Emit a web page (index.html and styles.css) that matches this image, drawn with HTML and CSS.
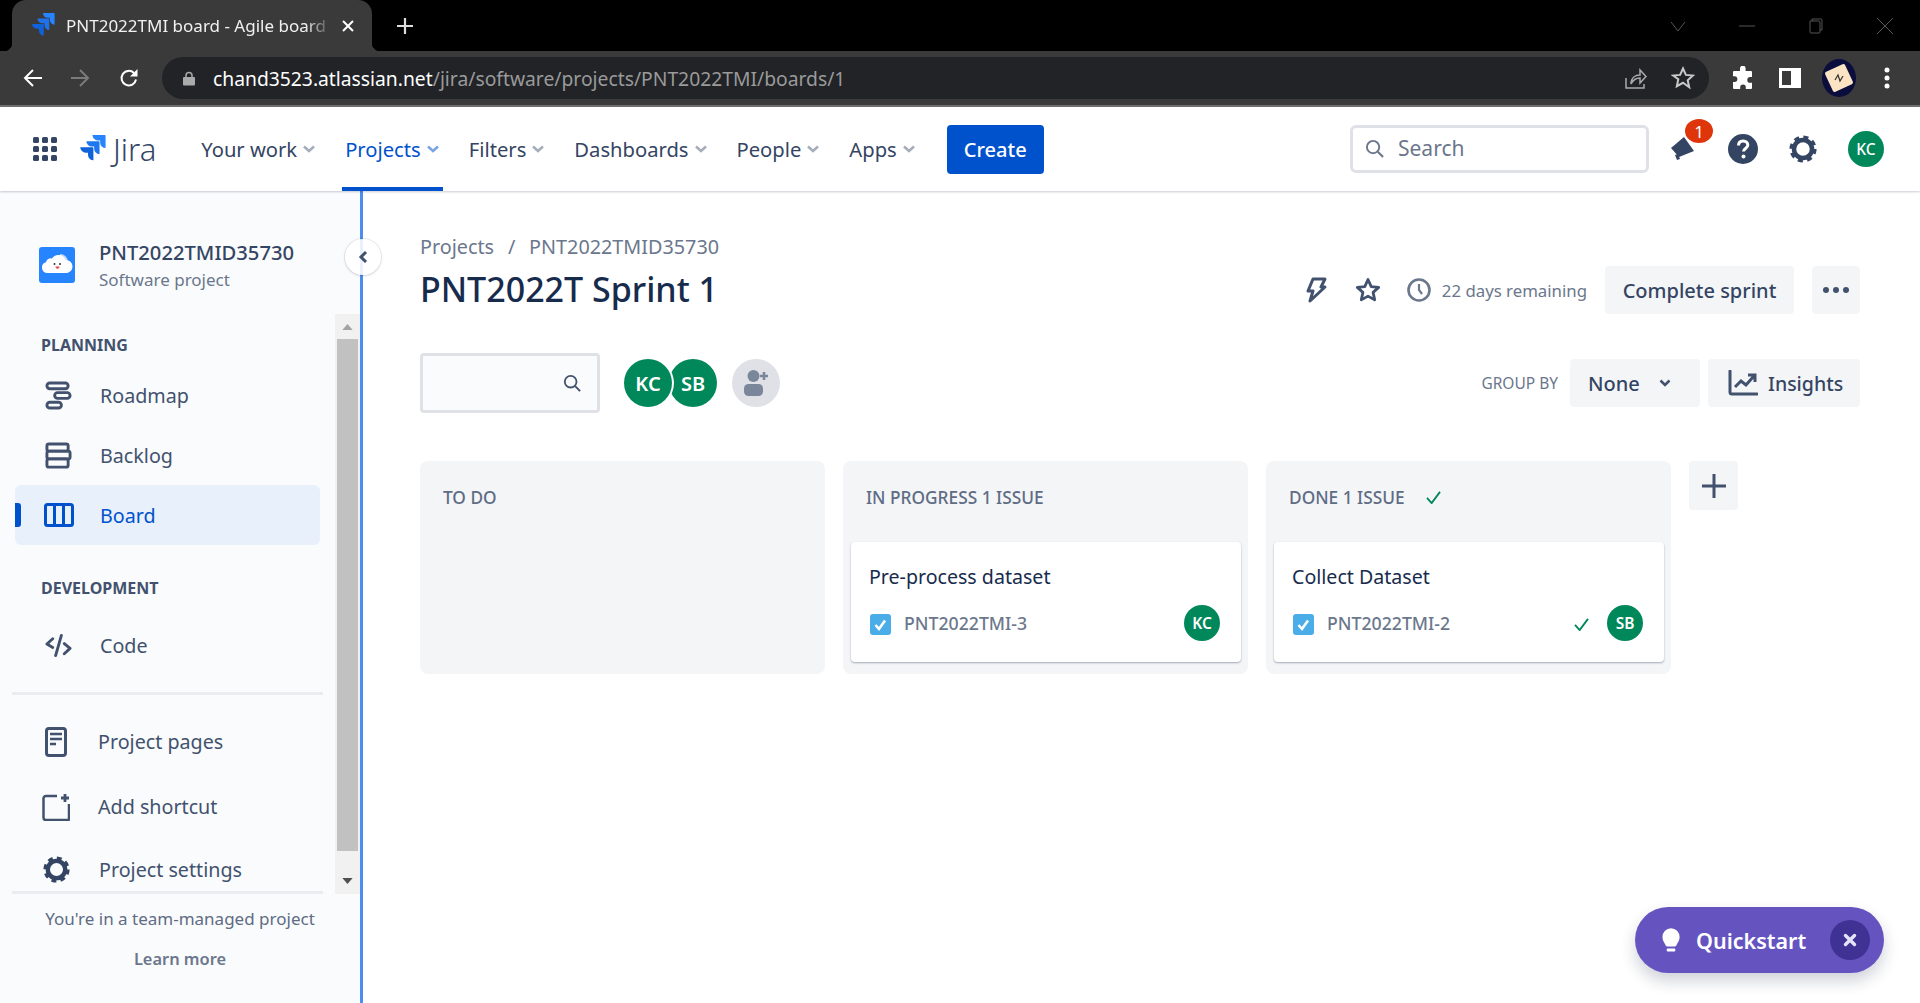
FILE: index.html
```html
<!DOCTYPE html>
<html lang="en">
<head>
<meta charset="utf-8">
<title>PNT2022TMI board - Agile board</title>
<link rel="stylesheet" href="styles.css">
</head>
<body>
<div class="app">
  <div class="tabstrip">
    <div class="tab">
      <svg class="favicon" viewBox="0 0 26 26"><path fill="#2684ff" d="M25 0H13.4a5 5 0 0 0 5 5h2.2v2.1a5 5 0 0 0 5 5V.8A.8.8 0 0 0 25 0z"/><path fill="#2072ea" d="M19.4 5.700H7.800a5 5 0 0 0 5 5H15v2.100a5 5 0 0 0 5 5V6.500a.8.8 0 0 0-.6-.8z"/><path fill="#0f62d8" d="M13.700 11.400H2.100a5 5 0 0 0 5 5h2.200v2.100a5 5 0 0 0 5 5V12.200a.8.8 0 0 0-.6-.8z"/></svg>
      <span class="tab-title">PNT2022TMI board - Agile board</span>
      <svg class="tab-close" viewBox="0 0 14 14"><path d="M2 2l10 10M12 2L2 12" stroke="#fff" stroke-width="2"/></svg>
    </div>
    <svg class="new-tab" viewBox="0 0 18 18"><path d="M9 1v16M1 9h16" stroke="#ddd" stroke-width="2.200"/></svg>
    <div class="win-controls">
      <svg viewBox="0 0 16 16"><path d="M1 4l7 9 7-9" fill="none" stroke="#555" stroke-width="1"/></svg>
      <svg viewBox="0 0 16 16"><path d="M0 8h16" stroke="#555" stroke-width="1"/></svg>
      <svg viewBox="0 0 16 16"><path d="M4 3V1h9a1 1 0 0 1 1 1v10h-2M2 3h9a1 1 0 0 1 1 1v10a1 1 0 0 1-1 1H3a1 1 0 0 1-1-1V3z" fill="none" stroke="#555" stroke-width="1"/></svg>
      <svg viewBox="0 0 16 16"><path d="M0 0l16 16M16 0L0 16" stroke="#555" stroke-width="1"/></svg>
    </div>
  </div>

  <div class="toolbar">
    <svg class="tool-icon back" viewBox="0 0 20 20"><path d="M19 10H2M10 2l-8 8 8 8" fill="none" stroke="#fff" stroke-width="2"/></svg>
    <svg class="tool-icon forward" viewBox="0 0 20 20"><path d="M1 10h17M10 2l8 8-8 8" fill="none" stroke="#7b7b7b" stroke-width="2"/></svg>
    <svg class="tool-icon reload" viewBox="0 0 20 20"><path d="M17 11.500A7.300 7.300 0 1 1 15 5" fill="none" stroke="#fff" stroke-width="2"/><path d="M18.500 1v7.500H11z" fill="#fff"/></svg>
    <div class="omnibox">
      <svg class="lock" viewBox="0 0 12 14"><path d="M3 6V4a3 3 0 0 1 6 0v2" fill="none" stroke="#aaa" stroke-width="1.500"/><rect y="5.500" width="12" height="8.500" rx="1" fill="#aaa"/></svg>
      <span class="url"><span class="url-host">chand3523.atlassian.net</span><span class="url-path">/jira/software/projects/PNT2022TMI/boards/1</span></span>
      <svg class="share" viewBox="0 0 22 22"><path d="M1 11v10h18v-4" fill="none" stroke="#aaa" stroke-width="1.500"/><path d="M6 17c0-6 4-9 9-9V3l6 6.500-6 6.500v-5c-4 0-7 2-9 6z" fill="none" stroke="#aaa" stroke-width="1.500"/></svg>
      <svg class="bookmark" viewBox="0 0 24 24"><path d="M12 2.500l2.900 6.400 7 .7-5.200 4.700 1.500 6.900L12 16.800l-6.200 3.400 1.500-6.900L2.100 9.600l7-.7z" fill="none" stroke="#c8c8c8" stroke-width="2"/></svg>
    </div>
    <svg class="puzzle" viewBox="0 0 24 24"><path fill="#fff" d="M9 2.500a2.800 2.800 0 0 1 5.600 0V5H20a1 1 0 0 1 1 1v5h-1.800a2.900 2.900 0 0 0 0 5.800H21V22a1 1 0 0 1-1 1h-5.200v-1.600a2.800 2.800 0 0 0-5.600 0V23H3a1 1 0 0 1-1-1v-6h1.500a2.900 2.900 0 0 0 0-5.800H2V6a1 1 0 0 1 1-1h6z"/></svg>
    <svg class="side-panel" viewBox="0 0 22 22"><path fill="#fff" fill-rule="evenodd" d="M0 1h22v20H0zM3 4v14h9V4z"/></svg>
    <svg class="profile" viewBox="0 0 34 38"><ellipse cx="17" cy="19" rx="17" ry="19" fill="#0b0d3d"/><rect x="6" y="8" width="22" height="22" rx="2" fill="#fbe4c4" transform="rotate(-25 17 19)"/><path d="M13 21l3-5 2 6 3-5" fill="none" stroke="#333" stroke-width="1.200"/></svg>
    <svg class="kebab" viewBox="0 0 6 24"><circle cx="3" cy="4" r="2.500" fill="#fff"/><circle cx="3" cy="12" r="2.500" fill="#fff"/><circle cx="3" cy="20" r="2.500" fill="#fff"/></svg>
  </div>

  <header class="topnav">
    <svg class="apps" viewBox="0 0 24 24"><g fill="#344563"><rect width="6" height="6" rx="1.500"/><rect x="9" width="6" height="6" rx="1.500"/><rect x="18" width="6" height="6" rx="1.500"/><rect y="9" width="6" height="6" rx="1.500"/><rect x="9" y="9" width="6" height="6" rx="1.500"/><rect x="18" y="9" width="6" height="6" rx="1.500"/><rect y="18" width="6" height="6" rx="1.500"/><rect x="9" y="18" width="6" height="6" rx="1.500"/><rect x="18" y="18" width="6" height="6" rx="1.500"/></g></svg>
    <svg class="jira-mark" viewBox="0 0 26 26"><path fill="#2684ff" d="M25 0H13.4a5 5 0 0 0 5 5h2.200v2.100a5 5 0 0 0 5 5V.8A.8.8 0 0 0 25 0z"/><path fill="#1d78f0" d="M19.400 5.700H7.800a5 5 0 0 0 5 5H15v2.100a5 5 0 0 0 5 5V6.500a.8.8 0 0 0-.6-.8z"/><path fill="#0f62d8" d="M13.700 11.400H2.100a5 5 0 0 0 5 5h2.200v2.100a5 5 0 0 0 5 5V12.200a.8.8 0 0 0-.6-.8z"/></svg>
    <span class="jira-word">Jira</span>
    <nav class="menu">
      <a class="menu-item">Your work<svg class="chev" viewBox="0 0 14 8"><path d="M2 1.500L7 6l5-4.500" fill="none" stroke="#a5adba" stroke-width="2.600"/></svg></a>
      <a class="menu-item active">Projects<svg class="chev" viewBox="0 0 14 8"><path d="M2 1.500L7 6l5-4.500" fill="none" stroke="#7aa5e6" stroke-width="2.600"/></svg></a>
      <a class="menu-item">Filters<svg class="chev" viewBox="0 0 14 8"><path d="M2 1.500L7 6l5-4.500" fill="none" stroke="#a5adba" stroke-width="2.600"/></svg></a>
      <a class="menu-item">Dashboards<svg class="chev" viewBox="0 0 14 8"><path d="M2 1.500L7 6l5-4.500" fill="none" stroke="#a5adba" stroke-width="2.600"/></svg></a>
      <a class="menu-item">People<svg class="chev" viewBox="0 0 14 8"><path d="M2 1.500L7 6l5-4.500" fill="none" stroke="#a5adba" stroke-width="2.600"/></svg></a>
      <a class="menu-item">Apps<svg class="chev" viewBox="0 0 14 8"><path d="M2 1.500L7 6l5-4.500" fill="none" stroke="#a5adba" stroke-width="2.600"/></svg></a>
    </nav>
    <button class="create">Create</button>
    <div class="top-search">
      <svg class="search-ic" viewBox="0 0 20 20"><circle cx="8.500" cy="8.500" r="6.500" fill="none" stroke="#6b778c" stroke-width="2"/><path d="M13.500 13.500L19 19" stroke="#6b778c" stroke-width="2.200"/></svg>
      <span>Search</span>
    </div>
    <div class="bell-wrap">
      <svg class="bell" viewBox="0 0 26 28"><path fill="#344563" d="M1 13L14 2l10 14-15 6z"/><path fill="#344563" d="M5 20l3-1 2 5-3 1z"/></svg>
      <span class="badge">1</span>
    </div>
    <svg class="help" viewBox="0 0 30 30"><circle cx="15" cy="15" r="15" fill="#344563"/><path d="M10.500 11.500c0-3 2-4.500 4.700-4.500 2.800 0 4.600 1.700 4.600 4 0 3.500-4.300 3.400-4.300 6.500" fill="none" stroke="#fff" stroke-width="3"/><circle cx="15.500" cy="22.500" r="2" fill="#fff"/></svg>
    <svg class="gear gear-top" viewBox="0 0 28 28"><circle cx="14" cy="14" r="9" fill="none" stroke="#344563" stroke-width="4.500"/><circle cx="14" cy="14" r="11.800" fill="none" stroke="#344563" stroke-width="3.600" stroke-dasharray="5 4.270"/></svg>
    <span class="avatar avatar-top">KC</span>
  </header>

  <div class="workspace">
    <aside class="sidebar">
      <button class="collapse"><svg viewBox="0 0 10 14"><path d="M8 2L3 7l5 5" fill="none" stroke="#42526e" stroke-width="3"/></svg></button>
      <div class="project">
        <svg class="project-ic" viewBox="0 0 36 36"><rect width="36" height="36" rx="3" fill="#2684ff"/><path fill="#c5d9f7" d="M21 7a8 8 0 0 1 8 7 6.500 6.500 0 0 1-1 12h-6z"/><path fill="#fff" d="M8.500 26A5.500 5.500 0 0 1 7 15.200a5 5 0 0 1 6-3.700 7.500 7.500 0 0 1 13.500 1.500 6.500 6.500 0 0 1 1 13z"/><circle cx="15.500" cy="17" r="1" fill="#333"/><circle cx="21" cy="17" r="1" fill="#333"/><path d="M16.500 19.500h4c0 3-4 3-4 0z" fill="#e5484d"/></svg>
        <div class="project-text">
          <div class="project-name">PNT2022TMID35730</div>
          <div class="project-type">Software project</div>
        </div>
      </div>
      <div class="scroll-area">
        <div class="nav-col">
          <div class="nav-scroll">
            <div class="nav-heading nav-heading-first">PLANNING</div>
            <a class="nav-row"><svg class="nav-ic" viewBox="0 0 28 30"><g fill="none" stroke="#42526e" stroke-width="3"><rect x="2" y="2" width="22" height="6" rx="3"/><rect x="10" y="12" width="16" height="6" rx="3"/><rect x="2" y="22" width="15" height="6" rx="3"/></g></svg><span>Roadmap</span></a>
            <a class="nav-row"><svg class="nav-ic" viewBox="0 0 28 28"><g fill="none" stroke="#42526e" stroke-width="3"><rect x="2" y="2" width="22" height="7.500" rx="2"/><rect x="2" y="9.500" width="24" height="8" rx="2"/><rect x="2" y="17.500" width="22" height="8.500" rx="2"/></g></svg><span>Backlog</span></a>
            <a class="nav-row current"><svg class="nav-ic board-ic" viewBox="0 0 30 24"><rect x="1.500" y="1.500" width="27" height="21" rx="2" fill="none" stroke="#0052cc" stroke-width="3"/><path d="M10.500 2v20M19.500 2v20" stroke="#0052cc" stroke-width="3"/></svg><span>Board</span></a>
            <div class="nav-heading">DEVELOPMENT</div>
            <a class="nav-row"><svg class="nav-ic" viewBox="0 0 28 24"><path d="M8 5L2 10.500 8 14M20 10l6 5-6 5.500M17 1.500L11 22.500" fill="none" stroke="#42526e" stroke-width="3" stroke-linecap="round" stroke-linejoin="round"/></svg><span>Code</span></a>
            <div class="nav-divider"></div>
            <a class="nav-row nav-row-sm"><svg class="nav-ic page-ic" viewBox="0 0 22 30"><rect x="1.500" y="1.500" width="19" height="27" rx="2.500" fill="none" stroke="#42526e" stroke-width="3"/><path d="M5 7h12M5 12h12M5 17h6" stroke="#42526e" stroke-width="2.500"/></svg><span>Project pages</span></a>
            <a class="nav-row nav-row-sm shortcut-row"><svg class="nav-ic shortcut-ic" viewBox="0 0 28 28"><path d="M15 3H4a2.500 2.500 0 0 0-2.500 2.500v19A2.500 2.500 0 0 0 4 27h22a1 1 0 0 0 1-1V11" fill="none" stroke="#42526e" stroke-width="2.500"/><path d="M23 1v8M19 5h8" stroke="#42526e" stroke-width="2.800"/></svg><span>Add shortcut</span></a>
            <a class="nav-row nav-row-sm"><svg class="nav-ic gear-ic" viewBox="0 0 28 28"><circle cx="14" cy="14" r="9" fill="none" stroke="#344563" stroke-width="4.500"/><circle cx="14" cy="14" r="11.800" fill="none" stroke="#344563" stroke-width="3.600" stroke-dasharray="5 4.270"/></svg><span>Project settings</span></a>
          </div>
          <div class="nav-divider nav-divider-end"></div>
        </div>
        <div class="scrollbar">
          <svg class="sb-arrow" viewBox="0 0 12 7"><path d="M6 0l6 7H0z" fill="#a3a3a3"/></svg>
          <div class="sb-thumb"></div>
          <svg class="sb-arrow" viewBox="0 0 12 7"><path d="M0 0h12L6 7z" fill="#505050"/></svg>
        </div>
      </div>
      <div class="side-foot">
        <div class="foot-note">You're in a team-managed project</div>
        <div class="foot-link">Learn more</div>
      </div>
    </aside>

    <main class="board">
      <div class="crumbs"><span>Projects</span><span class="crumb-sep">/</span><span>PNT2022TMID35730</span></div>
      <div class="title-row">
        <h1>PNT2022T Sprint 1</h1>
        <div class="title-actions">
          <svg class="ic-bolt" viewBox="0 0 22 26"><path d="M8 2h12l-4 8h4L5 24l3-10H3z" fill="none" stroke="#42526e" stroke-width="3" stroke-linejoin="round"/></svg>
          <svg class="ic-star" viewBox="0 0 26 26"><path d="M13 2.500l3.200 7.100 7.500.8-5.600 5 1.600 7.500-6.700-3.800-6.700 3.800 1.600-7.500-5.600-5 7.500-.8z" fill="none" stroke="#42526e" stroke-width="2.800" stroke-linejoin="round"/></svg>
          <svg class="ic-clock" viewBox="0 0 24 24"><circle cx="12" cy="12" r="10.500" fill="none" stroke="#6b778c" stroke-width="2.600"/><path d="M12 6v6l3 4" fill="none" stroke="#6b778c" stroke-width="2.200"/></svg>
          <span class="days">22 days remaining</span>
          <button class="btn btn-complete">Complete sprint</button>
          <button class="btn btn-more"><svg viewBox="0 0 26 6"><circle cx="3" cy="3" r="3" fill="#42526e"/><circle cx="13" cy="3" r="3" fill="#42526e"/><circle cx="23" cy="3" r="3" fill="#42526e"/></svg></button>
        </div>
      </div>
      <div class="filter-row">
        <div class="board-search"><svg viewBox="0 0 20 20"><circle cx="8.500" cy="8.500" r="6.500" fill="none" stroke="#42526e" stroke-width="2"/><path d="M13.500 13.500L19 19" stroke="#42526e" stroke-width="2.200"/></svg></div>
        <div class="people">
          <span class="avatar avatar-lg">KC</span>
          <span class="avatar avatar-lg avatar-stack">SB</span>
        </div>
        <span class="add-person"><svg viewBox="0 0 26 28"><circle cx="10.500" cy="7" r="6" fill="#7a869a"/><rect x="1" y="15" width="19" height="12" rx="4.500" fill="#7a869a"/><path d="M21 3v8M17 7h8" stroke="#7a869a" stroke-width="2.600"/></svg></span>
        <div class="filter-right">
          <span class="group-label">GROUP BY</span>
          <button class="btn btn-none">None<svg viewBox="0 0 12 8"><path d="M1.500 1.500L6 6l4.500-4.500" fill="none" stroke="#42526e" stroke-width="2.600"/></svg></button>
          <button class="btn btn-insights"><svg viewBox="0 0 30 26"><path d="M2 1v21a2 2 0 0 0 2 2h25" fill="none" stroke="#42526e" stroke-width="3" stroke-linecap="round"/><path d="M7 17l6-6 5 4 8-9M20 5h7v7" fill="none" stroke="#42526e" stroke-width="3"/></svg>Insights</button>
        </div>
      </div>
      <div class="columns">
        <section class="col"><div class="col-head">TO DO</div></section>
        <section class="col">
          <div class="col-head">IN PROGRESS 1 ISSUE</div>
          <article class="card">
            <div class="card-title">Pre-process dataset</div>
            <div class="card-meta">
              <svg class="task" viewBox="0 0 21 21"><rect width="21" height="21" rx="3" fill="#4bade8"/><path d="M5.500 11l3.500 4 6-8.500" fill="none" stroke="#fff" stroke-width="2.600"/></svg>
              <span class="key">PNT2022TMI-3</span>
              <span class="avatar avatar-sm">KC</span>
            </div>
          </article>
        </section>
        <section class="col">
          <div class="col-head">DONE 1 ISSUE<svg class="done-check" viewBox="0 0 16 14"><path d="M1 7.500L6 13 15 1" fill="none" stroke="#00875a" stroke-width="2"/></svg></div>
          <article class="card">
            <div class="card-title">Collect Dataset</div>
            <div class="card-meta">
              <svg class="task" viewBox="0 0 21 21"><rect width="21" height="21" rx="3" fill="#4bade8"/><path d="M5.500 11l3.500 4 6-8.500" fill="none" stroke="#fff" stroke-width="2.600"/></svg>
              <span class="key">PNT2022TMI-2</span>
              <svg class="card-check" viewBox="0 0 16 14"><path d="M1 7.500L6 13 15 1" fill="none" stroke="#00875a" stroke-width="2"/></svg>
              <span class="avatar avatar-sm">SB</span>
            </div>
          </article>
        </section>
        <button class="add-col"><svg viewBox="0 0 26 26"><path d="M13 1v24M1 13h24" stroke="#42526e" stroke-width="3"/></svg></button>
      </div>
    </main>
  </div>

  <div class="quickstart">
    <svg class="bulb" viewBox="0 0 20 26"><path fill="#fff" d="M10 0a9.500 9.500 0 0 0-9.500 9.500c0 4 2.500 6 3.500 8.500 .3 .8 .8 1.200 1.500 1.200h9c.7 0 1.200-.4 1.500-1.200 1-2.500 3.500-4.500 3.500-8.500A9.500 9.500 0 0 0 10 0z" transform="translate(0 0) scale(.95 1)"/><rect x="5" y="21.500" width="9" height="3" rx="1" fill="#fff"/></svg>
    <span class="qs-label">Quickstart</span>
    <span class="qs-close"><svg viewBox="0 0 14 14"><path d="M2.500 2.500l9 9M11.500 2.500l-9 9" stroke="#e6e3f7" stroke-width="3.400" stroke-linecap="round"/></svg></span>
  </div>
</div>
</body>
</html>
```

FILE: styles.css
```css
* { box-sizing: border-box; }
html, body { margin: 0; padding: 0; height: 100%; overflow: hidden; }
body { font-family: "Noto Sans", "Open Sans", sans-serif; color: #42526e; background: #fff; }
svg { display: block; flex: none; }
button { font-family: inherit; border: 0; }
.app { position: relative; width: 1920px; height: 1003px; display: flex; flex-direction: column; overflow: hidden; }

/* browser chrome */
.tabstrip { height: 51px; background: #000; display: flex; align-items: center; flex: none; }
.tab { position: relative; width: 360px; height: 51px; margin-left: 12px; background: #3a3a3a; border-radius: 14px 14px 0 0; display: flex; align-items: center; padding-left: 18px; align-self: flex-end; }
.tab::before, .tab::after { content: ""; position: absolute; bottom: 0; width: 8px; height: 8px; }
.tab::before { left: -8px; background: radial-gradient(circle at 0 0, #000 8px, #3a3a3a 8.500px); }
.tab::after { right: -8px; background: radial-gradient(circle at 100% 0, #000 8px, #3a3a3a 8.500px); }
.favicon { width: 25px; height: 25px; }
.tab-title { margin-left: 11px; width: 266px; flex: none; font-size: 17px; color: #f0f0f0; white-space: nowrap; overflow: hidden; -webkit-mask-image: linear-gradient(90deg, #000 90%, transparent); mask-image: linear-gradient(90deg, #000 90%, transparent); }
.tab-close { width: 14px; height: 14px; margin-left: 9px; }
.new-tab { width: 18px; height: 18px; margin-left: 24px; }
.win-controls { margin-left: auto; display: flex; gap: 53px; padding-right: 27px; }
.win-controls svg { width: 16px; height: 16px; }
.toolbar { height: 56px; background: #3a3a3a; border-bottom: 2px solid #6f6f6f; display: flex; align-items: center; flex: none; }
.tool-icon { width: 20px; height: 20px; }
.back { margin-left: 23px; }
.forward { margin-left: 27px; }
.reload { margin-left: 29px; }
.omnibox { margin-left: 23px; width: 1547px; height: 42px; background: #212327; border-radius: 21px; display: flex; align-items: center; padding-left: 21px; }
.lock { width: 12px; height: 15px; }
.url { margin-left: 18px; font-size: 19.300px; white-space: nowrap; color: #9a9a9a; }
.url-host { color: #fff; }
.share { width: 22px; height: 22px; margin-left: auto; }
.bookmark { width: 24px; height: 24px; margin-left: 24px; margin-right: 14px; }
.puzzle { width: 24px; height: 24px; margin-left: 22px; }
.side-panel { width: 22px; height: 22px; margin-left: 24px; }
.profile { width: 34px; height: 38px; margin-left: 21px; }
.kebab { width: 6px; height: 24px; margin-left: 28px; }

/* jira top nav */
.topnav { position: relative; z-index: 3; height: 84px; flex: none; background: #fff; box-shadow: 0 1px 2px rgba(9,30,66,.22); display: flex; align-items: center; padding: 0 36px 0 33px; }
.apps { width: 24px; height: 24px; }
.jira-mark { width: 28px; height: 28px; margin-left: 21px; }
.jira-word { margin-left: 7px; font-size: 31px; font-weight: 300; color: #344563; font-family: "Noto Sans", sans-serif; line-height: 1; }
.menu { display: flex; height: 84px; margin-left: 42px; }
.menu-item { display: flex; align-items: center; gap: 5px; padding: 4px 3px 0; margin-right: 23px; font-size: 20.200px; color: #344563; border-bottom: 4px solid transparent; white-space: nowrap; }
.menu-item.active { color: #0052cc; border-bottom-color: #0052cc; }
.chev { width: 14px; height: 8px; }
.create { width: 97px; height: 49px; margin-left: 5px; background: #0052cc; color: #fff; font-size: 20px; font-weight: 500; border-radius: 4px; }
.top-search { margin-left: auto; width: 299px; height: 48px; border: 3px solid #dfe1e6; border-radius: 6px; display: flex; align-items: center; padding: 0 0 2px 12px; font-size: 21px; color: #6b778c; }
.search-ic { width: 19px; height: 19px; margin-right: 14px; }
.bell-wrap { position: relative; width: 26px; height: 28px; margin-left: 21px; }
.bell { width: 26px; height: 28px; }
.badge { position: absolute; left: 15px; top: -16px; width: 28px; height: 24px; border-radius: 50%; background: #de350b; color: #fff; font-size: 17px; display: flex; align-items: center; justify-content: center; }
.help { width: 30px; height: 30px; margin-left: 32px; }
.gear-top { width: 28px; height: 28px; margin-left: 31px; }
.gear { width: 28px; height: 28px; }
.avatar { display: inline-flex; align-items: center; justify-content: center; background: #00875a; color: #fff; border-radius: 50%; font-weight: 600; flex: none; }
.avatar-top { width: 36px; height: 36px; margin-left: 31px; font-size: 15.500px; font-weight: 500; }

/* layout */
.workspace { flex: 1; display: flex; min-height: 0; }
.sidebar { position: relative; width: 363px; flex: none; background: #fafbfc; border-right: 3px solid #4c8ef0; display: flex; flex-direction: column; }
.collapse { position: absolute; right: -21px; top: 48px; z-index: 2; width: 36px; height: 36px; border-radius: 50%; background: rgba(255,255,255,.88); box-shadow: 0 0 0 1px rgba(9,30,66,.08), 0 1px 3px rgba(9,30,66,.15); display: flex; align-items: center; justify-content: center; padding: 0; }
.collapse svg { width: 10px; height: 14px; }
.project { height: 123px; flex: none; display: flex; padding: 56px 0 0 39px; }
.project-ic { width: 36px; height: 36px; }
.project-text { margin-left: 24px; margin-top: -8px; }
.project-name { font-size: 20.200px; font-weight: 500; color: #344563; line-height: 27px; }
.project-type { font-size: 17px; color: #6b778c; line-height: 27px; }
.scroll-area { display: flex; height: 580px; flex: none; }
.nav-col { width: 335px; display: flex; flex-direction: column; }
.nav-scroll { flex: 1; min-height: 0; overflow: hidden; }
.nav-heading { font-size: 16px; font-weight: 700; color: #42526e; padding-left: 41px; height: 70px; padding-top: 32px; line-height: 22px; }
.nav-heading-first { height: 51px; padding-top: 20px; }
.nav-row { display: flex; align-items: center; height: 60px; margin: 0 15px; padding-left: 30px; font-size: 19.700px; color: #42526e; border-radius: 6px; position: relative; }
.nav-row span { margin-left: 28px; }
.nav-ic { width: 27px; height: 29px; }
.nav-row.current { background: #e8f0fb; color: #0052cc; }
.nav-row.current span { margin-left: 26px; }
.nav-row.current::before { content: ""; position: absolute; left: 0; top: 18px; width: 6px; height: 24px; background: #0052cc; border-radius: 0 3px 3px 0; }
.board-ic { width: 30px; height: 24px; margin-left: -1px; }
.nav-divider { height: 3px; background: #ebecf0; margin: 17px 12px 15px; }
.nav-divider-end { margin: 0 12px; flex: none; }
.nav-row-sm { height: 63px; }
.shortcut-row { margin-top: 2px; }
.page-ic { width: 22px; height: 30px; }
.page-ic + span { margin-left: 31px; }
.shortcut-ic { width: 28px; height: 28px; margin-left: -3px; }
.shortcut-ic + span { margin-left: 28px; }
.gear-ic { width: 27px; height: 27px; margin-left: -2px; }
.gear-ic + span { margin-left: 29px; }
.scrollbar { width: 25px; background: #f1f1f1; display: flex; flex-direction: column; align-items: center; }
.sb-arrow { width: 11px; height: 6px; margin: 10px 0 9px; }
.sb-thumb { width: 21px; flex: 1; background: #c1c1c1; }
.scrollbar .sb-arrow:last-child { margin: 27px 0 10px; }
.side-foot { flex: 1; text-align: center; padding: 13px 0 0 25px; width: 335px; }
.foot-note { font-size: 17px; line-height: 24px; color: #5e6c84; white-space: nowrap; }
.foot-link { font-size: 16.400px; font-weight: 600; color: #6b778c; margin-top: 16px; line-height: 24px; }

/* board */
.board { flex: 1; min-width: 0; padding: 42px 60px 0 57px; }
.crumbs { display: flex; gap: 11px; font-size: 19.800px; color: #6b778c; line-height: 28px; }
.crumb-sep { width: 13px; text-align: center; }
.title-row { display: flex; align-items: center; height: 52px; margin-top: 3px; }
h1 { margin: -2px 0 0; font-size: 34px; font-weight: 500; color: #172b4d; line-height: 48px; }
.title-actions { margin-left: auto; display: flex; align-items: center; }
.ic-bolt { width: 22px; height: 26px; }
.ic-star { width: 26px; height: 26px; margin-left: 28px; }
.ic-clock { width: 24px; height: 24px; margin-left: 26px; }
.days { margin-left: 11px; font-size: 16.800px; color: #6b778c; white-space: nowrap; }
.btn { display: flex; align-items: center; height: 48px; background: #f4f5f7; border-radius: 4px; color: #344563; font-size: 20px; padding: 0; }
.btn-complete { width: 189px; margin-left: 18px; justify-content: center; font-weight: 500; }
.btn-more { width: 48px; margin-left: 18px; justify-content: center; }
.btn-more svg { width: 28px; height: 6px; }
.filter-row { display: flex; align-items: center; height: 60px; margin-top: 37px; }
.board-search { width: 180px; height: 60px; background: #fafbfc; border: 3px solid #dfe1e6; border-radius: 4px; display: flex; align-items: center; justify-content: flex-end; padding-right: 16px; }
.board-search svg { width: 18px; height: 18px; }
.people { display: flex; margin-left: 24px; }
.avatar-lg { width: 48px; height: 48px; font-size: 20px; }
.people .avatar-stack { margin-left: -3px; }
.people .avatar:first-child { position: relative; z-index: 1; box-shadow: 2px 0 0 #fff; }
.add-person { width: 48px; height: 48px; margin-left: 15px; border-radius: 50%; background: #dfe1e6; display: flex; align-items: center; justify-content: center; }
.add-person svg { width: 26px; height: 28px; }
.filter-right { margin-left: auto; display: flex; align-items: center; }
.group-label { font-size: 15.500px; color: #6b778c; }
.btn-none { width: 130px; margin-left: 12px; padding-left: 18px; gap: 19px; font-weight: 500; }
.btn-none svg { width: 12px; height: 8px; }
.btn-insights { width: 152px; margin-left: 8px; padding-left: 20px; gap: 10px; font-size: 19.500px; font-weight: 500; }
.btn-insights svg { width: 30px; height: 26px; }
.columns { display: flex; gap: 18px; margin-top: 48px; align-items: flex-start; }
.col { width: 405px; height: 213px; background: #f4f5f7; border-radius: 8px; padding: 0 7px 0 8px; flex: none; }
.col-head { height: 72px; margin-bottom: 9px; display: flex; align-items: center; padding: 0 0 0 15px; font-size: 17.300px; font-weight: 500; color: #5e6c84; }
.done-check { width: 15px; height: 13px; margin-left: 21px; }
.card { height: 120px; background: #fff; border-radius: 4px; box-shadow: 0 1px 2px rgba(9,30,66,.35); padding: 20px 18px 0 18px; }
.card-title { font-size: 19.600px; line-height: 30px; color: #172b4d; }
.card-meta { display: flex; align-items: center; margin-top: 13px; height: 36px; padding-right: 3px; }
.task { width: 21px; height: 21px; margin: 3px 0 0 1px; }
.key { margin-left: 13px; font-size: 17.700px; font-weight: 500; color: #6b778c; }
.card-check { width: 15px; height: 13px; margin-left: auto; margin-right: 18px; margin-top: 2px; }
.avatar-sm { width: 36px; height: 36px; font-size: 15.500px; margin-left: auto; }
.card-check + .avatar-sm { margin-left: 0; }
.add-col { width: 49px; height: 49px; background: #f4f5f7; border-radius: 4px; padding: 0; display: flex; align-items: center; justify-content: center; }
.add-col svg { width: 26px; height: 26px; }

/* quickstart */
.quickstart { position: absolute; left: 1635px; top: 907px; width: 249px; height: 66px; border-radius: 33px; background: #6554c0; display: flex; align-items: center; padding-left: 27px; box-shadow: 0 8px 16px rgba(9,30,66,.2); color: #fff; }
.bulb { width: 19px; height: 25px; }
.qs-label { margin-left: 15px; font-size: 21.500px; font-weight: 600; }
.qs-close { position: absolute; right: 14px; top: 13px; width: 40px; height: 40px; border-radius: 50%; background: #403294; display: flex; align-items: center; justify-content: center; }
.qs-close svg { width: 14px; height: 14px; }
```
